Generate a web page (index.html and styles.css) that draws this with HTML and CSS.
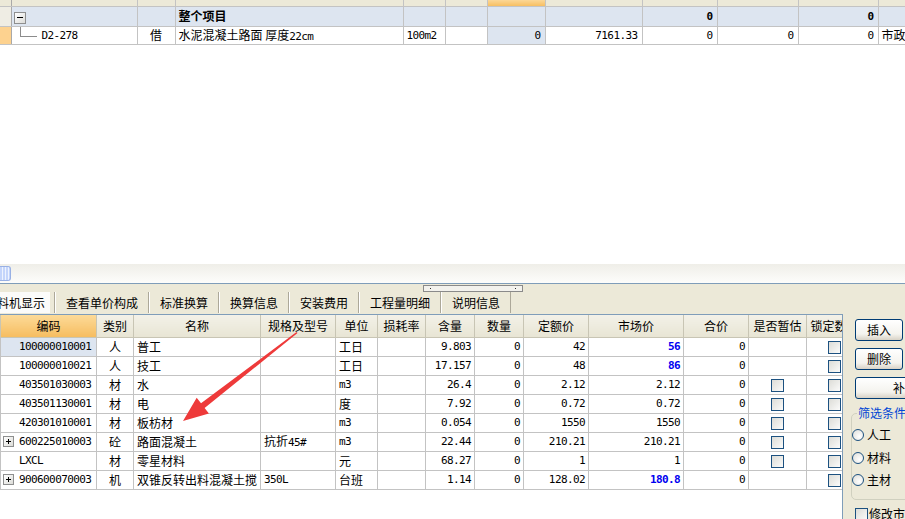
FILE: index.html
```html
<!DOCTYPE html>
<html lang="zh-CN">
<head>
<meta charset="utf-8">
<title>工料机显示</title>
<link rel="stylesheet" href="styles.css">
</head>
<body>
<div class="app">
  <div class="top-pane">
    <table class="grid tgrid">
      <colgroup><col><col><col><col><col><col><col><col><col><col><col><col></colgroup>
      <tr class="hd"><td class="gut"></td><td></td><td></td><td></td><td></td><td></td><td class="sel"></td><td></td><td></td><td></td><td></td><td></td></tr>
      <tr class="grp"><td class="gut"></td><td class="tc"><div class="cellf"><span class="tbtn minus"></span></div></td><td></td><td class="b">整个项目</td><td></td><td></td><td></td><td></td><td class="n b">0</td><td></td><td class="n b">0</td><td></td></tr>
      <tr class="item"><td class="gut cur"></td><td class="tc"><div class="cellf"><span class="tree"></span><span class="mono">D2-278</span></div></td><td class="c">借</td><td>水泥混凝土路面 厚度<span class="mono">22cm</span></td><td class="mono">100m2</td><td></td><td class="n selc">0</td><td class="n">7161.33</td><td class="n">0</td><td class="n">0</td><td class="n">0</td><td>市政</td></tr>
    </table>
  </div>
  <div class="hscroll"><div class="thumb"></div></div>
  <div class="tabbar">
    <div class="tabs">
      <div class="tab active">工料机显示</div>
      <div class="tab">查看单价构成</div>
      <div class="tab">标准换算</div>
      <div class="tab">换算信息</div>
      <div class="tab">安装费用</div>
      <div class="tab">工程量明细</div>
      <div class="tab last">说明信息</div>
    </div>
    <div class="grip"><span class="dot"></span><span class="dot"></span></div>
  </div>
  <div class="lower">
    <div class="lwrap">
      <table class="grid lgrid">
        <colgroup><col><col><col><col><col><col><col><col><col><col><col><col><col></colgroup>
        <tr class="hd"><th class="sel">编码</th><th>类别</th><th>名称</th><th>规格及型号</th><th>单位</th><th>损耗率</th><th>含量</th><th>数量</th><th>定额价</th><th>市场价</th><th>合价</th><th>是否暂估</th><th>锁定数量</th></tr>
        <tr><td class="code cur">100000010001</td><td class="c">人</td><td>普工</td><td></td><td>工日</td><td></td><td class="n">9.803</td><td class="n">0</td><td class="n">42</td><td class="n blue">56</td><td class="n">0</td><td></td><td class="c"><span class="cb"></span></td></tr>
        <tr><td class="code">100000010021</td><td class="c">人</td><td>技工</td><td></td><td>工日</td><td></td><td class="n">17.157</td><td class="n">0</td><td class="n">48</td><td class="n blue">86</td><td class="n">0</td><td></td><td class="c"><span class="cb"></span></td></tr>
        <tr><td class="code">403501030003</td><td class="c">材</td><td>水</td><td></td><td class="mono">m3</td><td></td><td class="n">26.4</td><td class="n">0</td><td class="n">2.12</td><td class="n">2.12</td><td class="n">0</td><td class="c"><span class="cb"></span></td><td class="c"><span class="cb"></span></td></tr>
        <tr><td class="code">403501130001</td><td class="c">材</td><td>电</td><td></td><td>度</td><td></td><td class="n">7.92</td><td class="n">0</td><td class="n">0.72</td><td class="n">0.72</td><td class="n">0</td><td class="c"><span class="cb"></span></td><td class="c"><span class="cb"></span></td></tr>
        <tr><td class="code">420301010001</td><td class="c">材</td><td>板枋材</td><td></td><td class="mono">m3</td><td></td><td class="n">0.054</td><td class="n">0</td><td class="n">1550</td><td class="n">1550</td><td class="n">0</td><td class="c"><span class="cb"></span></td><td class="c"><span class="cb"></span></td></tr>
        <tr><td class="code plus"><span class="tbtn pl"></span>600225010003</td><td class="c">砼</td><td>路面混凝土</td><td>抗折<span class="mono">45#</span></td><td class="mono">m3</td><td></td><td class="n">22.44</td><td class="n">0</td><td class="n">210.21</td><td class="n">210.21</td><td class="n">0</td><td class="c"><span class="cb"></span></td><td class="c"><span class="cb"></span></td></tr>
        <tr><td class="code">LXCL</td><td class="c">材</td><td>零星材料</td><td></td><td>元</td><td></td><td class="n">68.27</td><td class="n">0</td><td class="n">1</td><td class="n">1</td><td class="n">0</td><td class="c"><span class="cb"></span></td><td class="c"><span class="cb"></span></td></tr>
        <tr><td class="code plus"><span class="tbtn pl"></span>900600070003</td><td class="c">机</td><td>双锥反转出料混凝土搅</td><td class="mono">350L</td><td>台班</td><td></td><td class="n">1.14</td><td class="n">0</td><td class="n">128.02</td><td class="n blue">180.8</td><td class="n">0</td><td></td><td class="c"><span class="cb"></span></td></tr>
      </table>
    </div>
    <div class="side">
      <button class="btn">插入</button>
      <button class="btn">删除</button>
      <button class="btn wide">补充</button>
      <fieldset class="filter">
        <legend>筛选条件</legend>
        <label class="radio"><span class="rb"></span>人工</label>
        <label class="radio"><span class="rb"></span>材料</label>
        <label class="radio"><span class="rb"></span>主材</label>
      </fieldset>
      <label class="chk"><span class="cb"></span>修改市场价</label>
    </div>
  </div>
  <svg class="arrow" width="905" height="519" viewBox="0 0 905 519">
    <polygon points="297.5,333 204.6,408.1 208.9,413.6 183,421 196.7,397.8 201,403.3 296.5,332" fill="#ee3a3a"/>
  </svg>
</div>
</body>
</html>
```

FILE: styles.css
```css
* { box-sizing: border-box; }
html, body { margin: 0; padding: 0; }
body {
  width: 905px; height: 519px; overflow: hidden; background: #fff; color: #000;
  font-family: "Noto Sans CJK SC", "Noto Sans", sans-serif; font-size: 12px; line-height: 1;
}
.app { position: relative; display: flex; flex-direction: column; width: 905px; height: 519px; overflow: hidden; }

/* grids */
.grid { border-collapse: collapse; table-layout: fixed; }
.grid td, .grid th {
  border: 1px solid #c3c3c3; padding: 0 3px; white-space: nowrap; overflow: hidden; text-overflow: clip;
  font-weight: normal; text-align: left; vertical-align: middle;
}
.mono, .n, .code { font-family: "DejaVu Sans Mono", "Liberation Mono", monospace; font-size: 11px; letter-spacing: -0.6px; }
.grid td.n { text-align: right; }
.grid td.c { text-align: center; }
.grid .b { font-weight: bold; }
.grid td.blue { color: #0000f0; font-weight: bold; }

/* top grid */
.top-pane { height: 264px; flex: none; overflow: hidden; background: #fff; }
.tgrid { width: 938px; }
.tgrid col:nth-child(1) { width: 11px; }
.tgrid col:nth-child(2) { width: 126px; }
.tgrid col:nth-child(3) { width: 38px; }
.tgrid col:nth-child(4) { width: 228px; }
.tgrid col:nth-child(5) { width: 42px; }
.tgrid col:nth-child(6) { width: 42px; }
.tgrid col:nth-child(7) { width: 58px; }
.tgrid col:nth-child(8) { width: 97px; }
.tgrid col:nth-child(9) { width: 75px; }
.tgrid col:nth-child(10) { width: 81px; }
.tgrid col:nth-child(11) { width: 80px; }
.tgrid col:nth-child(12) { width: 60px; }
.tgrid tr.hd td { height: 6px; padding: 0; background: #ece9d8; border-top: 0; }
.tgrid tr.hd td.sel { background: linear-gradient(#fbd796, #f7bf62); }
.tgrid tr.grp td { height: 20px; background: #dde5f0; }
.tgrid tr.grp td.gut { background: #efede4; }
.tgrid tr.item td { height: 18px; }
.tgrid td.gut { padding: 0; border-left: 0; border-right-color: #a9a9a9; }
.tgrid tr.item td.cur { background: #fdd28f; }
.tgrid td.selc { background: #dde5f0; }
.tgrid td.n { padding-right: 4px; }
.tgrid td.tc { padding: 0; vertical-align: top; }
.cellf { display: flex; align-items: flex-start; }
.grp .cellf { padding: 5px 0 0 2px; }
.item .cellf { align-items: center; height: 17px; }
.tree { align-self: flex-start; width: 17px; height: 10px; margin-left: 8px; margin-right: 5px; border-left: 1px solid #8c8c8c; border-bottom: 1px solid #8c8c8c; }

.tbtn {
  position: relative; display: inline-block; width: 12px; height: 12px; flex: none;
  border: 1px solid #8e8f8f; background: linear-gradient(135deg, #ffffff, #dcdcd8);
  vertical-align: middle;
}
.tbtn::before { content: ""; position: absolute; left: 2px; top: 4px; width: 6px; height: 1px; background: #000; }
.tbtn.pl { width: 11px; height: 11px; margin-right: 5px; }
.tbtn.pl::before { left: 2px; top: 4px; width: 5px; }
.tbtn.pl::after { content: ""; position: absolute; left: 4px; top: 2px; width: 1px; height: 5px; background: #000; }

/* scrollbar */
.hscroll { height: 20px; flex: none; padding-top: 2px; background: linear-gradient(#efeee8, #fdfdfb); border-bottom: 1px solid #7f9db9; }
.thumb {
  width: 11px; height: 15px; border: 1px solid #98b0e4; border-left: 0; border-radius: 0 3px 3px 0;
  background: repeating-linear-gradient(90deg, #c4d5fb 0 2px, #eef3fe 2px 3px);
}

/* tabs */
.tabbar { position: relative; height: 30px; flex: none; background: #ece9d8; display: flex; align-items: flex-end; padding-bottom: 1px; }
.tabs { display: flex; margin-left: -20px; }
.tab { height: 21px; line-height: 21px; padding: 0 10px 0 11px; border-left: 1px solid #aca899; box-shadow: inset 1px 0 #fff; white-space: nowrap; }
.tab.active { border-left: 0; box-shadow: none; padding: 0 5px; margin-right: 4px; background: #fbfbf9; }
.tab.last { border-right: 1px solid #aca899; }
.grip { position: absolute; left: 423px; top: 1px; width: 100px; height: 7px; border: 1px solid #8a8a8a; background: #f3f2ed; display: flex; justify-content: space-between; align-items: center; padding: 0 6px; }
.dot { width: 1px; height: 1px; background: #333; }

/* lower area */
.lower { flex: 1; min-height: 0; display: flex; }
.lwrap { width: 843px; flex: none; overflow: hidden; background: #fff; border-top: 1px solid #7f9db9; border-right: 1px solid #7f9db9; }
.lgrid { width: 862px; }
.lgrid col:nth-child(1) { width: 96px; }
.lgrid col:nth-child(2) { width: 37px; }
.lgrid col:nth-child(3) { width: 127px; }
.lgrid col:nth-child(4) { width: 75px; }
.lgrid col:nth-child(5) { width: 42px; }
.lgrid col:nth-child(6) { width: 48px; }
.lgrid col:nth-child(7) { width: 49px; }
.lgrid col:nth-child(8) { width: 49px; }
.lgrid col:nth-child(9) { width: 65px; }
.lgrid col:nth-child(10) { width: 95px; }
.lgrid col:nth-child(11) { width: 65px; }
.lgrid col:nth-child(12) { width: 58px; }
.lgrid col:nth-child(13) { width: 56px; }
.lgrid tr.hd th { height: 22px; text-align: center; background: linear-gradient(#f3f1e8, #e8e5d4); border-top: 0; border-color: #c8c5b4; padding: 0; }
.lgrid tr.hd th.sel { background: linear-gradient(#fcda98, #f6bd60); }
.lgrid td { height: 19px; }
.lgrid td.code { padding-left: 18px; }
.lgrid td.code.plus { padding-left: 2px; }
.lgrid td.cur { background: #dde5f0; }
.lgrid td.n { padding-right: 3px; }
.cb {
  display: inline-block; width: 13px; height: 13px; vertical-align: middle;
  border: 1px solid #1c5180; background: linear-gradient(135deg, #dcdcd7, #fbfbfa);
}

/* side panel */
.side { flex: 1; min-width: 0; overflow: hidden; background: #ece9d8; padding: 5px 0 0 8px; display: flex; flex-direction: column; align-items: flex-start; }
.btn {
  flex: none; width: 48px; height: 22px; margin: 0 0 7px 4px; padding: 0;
  border: 1px solid #003c74; border-radius: 3px;
  background: linear-gradient(#ffffff, #f4f3ee 70%, #d8d2c6);
  font: inherit; color: #000; line-height: 20px; text-align: center;
}
.btn.wide { width: 100px; margin-bottom: 6px; }
.filter { flex: none; width: 80px; margin: 0; padding: 3px 0 7px 0; border: 1px solid #d0d0bf; border-radius: 5px; }
.filter legend { margin-left: 5px; padding: 0 1px; color: #0046d5; line-height: 16px; }
.radio { display: flex; align-items: center; gap: 3px; height: 22.5px; white-space: nowrap; }
.rb {
  width: 12px; height: 12px; border-radius: 50%; border: 1px solid #1c5180; flex: none;
  background: radial-gradient(circle at 65% 65%, #ffffff, #dcdcd7);
}
.chk { display: flex; align-items: flex-start; gap: 1px; margin: 8px 0 0 4px; white-space: nowrap; }
.chk .cb { flex: none; }

.arrow { position: absolute; left: 0; top: 0; pointer-events: none; }
```
